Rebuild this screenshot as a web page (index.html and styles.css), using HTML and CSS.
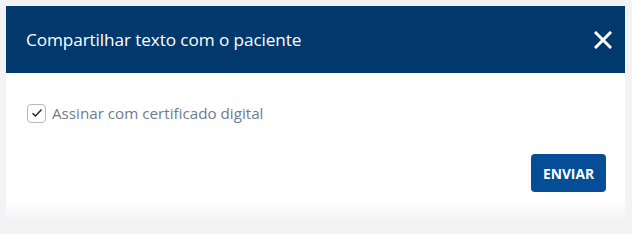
FILE: index.html
```html
<!DOCTYPE html>
<html lang="pt">
<head>
<meta charset="utf-8">
<link rel="stylesheet" href="styles.css">
</head>
<body>
<div class="dialog">
  <div class="header">
    <span class="title">Compartilhar texto com o paciente</span>
    <button class="close" aria-label="Fechar">
      <svg width="18" height="18" viewBox="0 0 18 18"><path d="M2 2L16 16M16 2L2 16" stroke="#fff" stroke-width="3" stroke-linecap="square"/></svg>
    </button>
  </div>
  <div class="content">
    <label class="check">
      <span class="box"><svg width="12" height="10" viewBox="0 0 12 10"><path d="M1.5 5.2L4.5 8L10.5 1.5" fill="none" stroke="#222" stroke-width="1.4"/></svg></span>
      <span class="label">Assinar com certificado digital</span>
    </label>
  </div>
  <div class="actions">
    <button class="send">ENVIAR</button>
  </div>
  <div class="fade"></div>
</div>
</body>
</html>
```
FILE: styles.css
```css
html, body { margin: 0; padding: 0; }
body {
  background: #f3f3f5;
  padding: 6px 7px 0 6px;
  font-family: "Open Sans", "Noto Sans", sans-serif;
  height: 234px;
  box-sizing: border-box;
}
.dialog {
  width: 619px;
  background: #fff;
  display: flex;
  flex-direction: column;
}
.header {
  height: 67px;
  background: #02396c;
  display: flex;
  align-items: center;
  justify-content: space-between;
  padding: 0 13px 0 20px;
}
.title {
  color: #fff;
  font-size: 17.2px;
  letter-spacing: -0.1px;
}
.close {
  background: none;
  border: 0;
  padding: 0;
  width: 18px;
  height: 18px;
  display: flex;
  margin-top: 1px;
}
.content {
  padding: 30px 20px 0 21px;
}
.check {
  display: flex;
  align-items: center;
  gap: 6px;
}
.box {
  width: 17px;
  height: 17px;
  border: 1px solid #b4b8c0;
  border-radius: 4px;
  display: flex;
  align-items: center;
  justify-content: center;
  box-sizing: content-box;
}
.label {
  color: #6f7b8e;
  font-size: 15.2px;
}
.actions {
  display: flex;
  justify-content: flex-end;
  padding: 31px 19px 0 0;
}
.send {
  width: 75px;
  height: 38px;
  background: #054e97;
  color: #fff;
  border: 0;
  border-radius: 4px;
  font-family: "Open Sans", sans-serif;
  font-weight: 700;
  font-size: 13.8px;
  padding: 0;
}
.fade {
  height: 29px;
  background: linear-gradient(#fff 0%, #fff 30%, #f3f3f5 100%);
}
```
